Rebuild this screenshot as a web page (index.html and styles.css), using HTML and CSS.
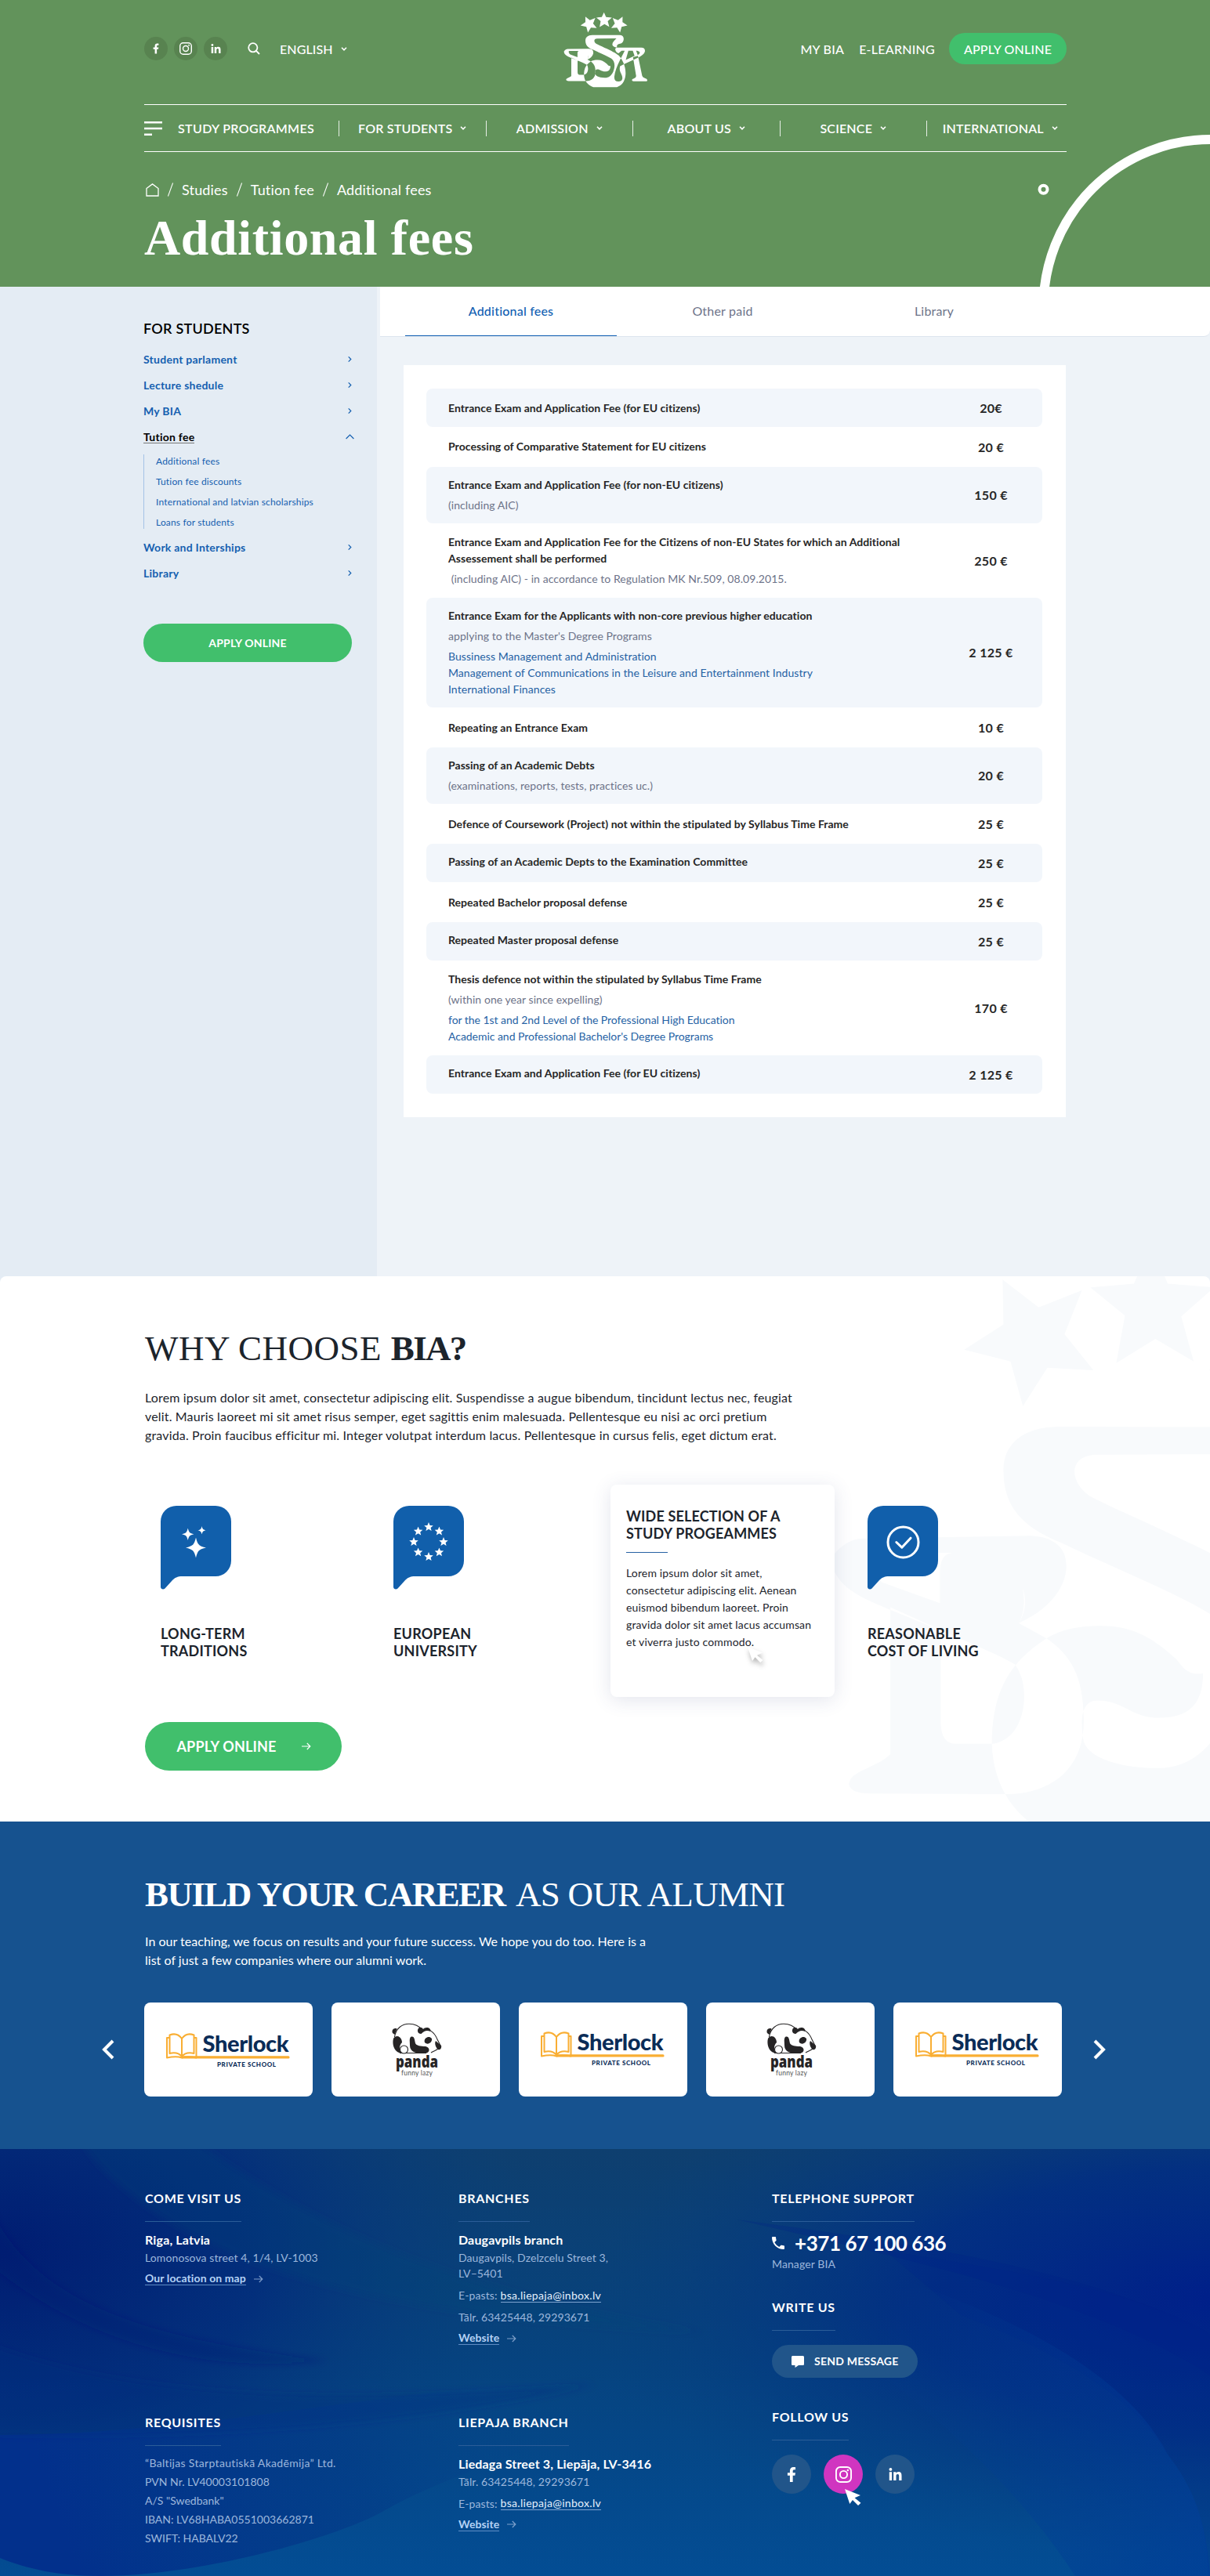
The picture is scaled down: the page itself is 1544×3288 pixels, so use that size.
FILE: index.html
```html
<!DOCTYPE html>
<html lang="en">
<head>
<meta charset="utf-8">
<title>Additional fees – BIA</title>
<link rel="stylesheet" href="styles.css">
</head>
<body>
<svg class="sprite" aria-hidden="true">
  <symbol id="fb" viewBox="0 0 320 512"><path d="M279.14 288l14.22-92.66h-88.91v-60.13c0-25.35 12.42-50.06 52.24-50.06h40.42V6.26S260.43 0 225.36 0c-73.22 0-121.08 44.38-121.08 124.72v70.62H22.89V288h81.39v224h100.17V288z"/></symbol>
  <symbol id="li" viewBox="0 0 448 448"><path d="M100.28 448H7.4V148.9h92.88zM53.79 108.1C24.09 108.1 0 83.5 0 53.8a53.79 53.79 0 0 1 107.58 0c0 29.7-24.1 54.3-53.79 54.3zM447.9 448h-92.68V302.4c0-34.7-.7-79.2-48.29-79.2-48.29 0-55.69 37.7-55.69 76.7V448h-92.78V148.9h89.08v40.8h1.3c12.4-23.5 42.69-48.3 87.88-48.3 94 0 111.28 61.9 111.28 142.3V448z"/></symbol>
  <symbol id="ig" viewBox="0 0 22 22"><g fill="none" stroke="currentColor" stroke-width="2"><rect x="1" y="1" width="20" height="20" rx="5.5"/><circle cx="11" cy="11" r="4.8"/></g><circle cx="16.6" cy="5.2" r="1.3"/></symbol>
  <symbol id="chev" viewBox="0 0 8 5"><path d="M1 .8L4 3.8 7 .8" fill="none" stroke="currentColor" stroke-width="1.6"/></symbol>
  <symbol id="arrow" viewBox="0 0 12 10"><path d="M0 5h10.6M6.8 1l4 4-4 4" fill="none" stroke="currentColor" stroke-width="1.2"/></symbol>
  <symbol id="next" viewBox="0 0 5 9"><path d="M.7 1.300L3.800 4.500.7 7.700" fill="none" stroke="currentColor" stroke-width="1.2"/></symbol>
  <symbol id="bubble" viewBox="0 0 90 107"><path d="M20 0H70a20 20 0 0 1 20 20V70a20 20 0 0 1-20 20H28c-7 0-10 2-13 5L5.500 105.500c-2 2-5.500 1-5.500-2V20A20 20 0 0 1 20 0z"/></symbol>
  <symbol id="spark" viewBox="-10 -10 20 20"><path d="M0-10C1.600-3 3-1.600 10 0 3 1.600 1.600 3 0 10-1.600 3-3 1.600-10 0-3-1.600-1.600-3 0-10z"/></symbol>
  <symbol id="star" viewBox="-10 -10 20 20"><path d="M0-10l2.700 6.500 6.900.500-5.300 4.500 1.700 6.700L0 4.500l-6 3.700 1.700-6.700-5.300-4.500 6.900-.500z"/></symbol>
  <symbol id="cursor" viewBox="0 0 20 20"><path d="M0 0l19 7.500-7 3.300 7.500 6.200-3.300 3-6.700-6.700L6 18z"/></symbol>
  <symbol id="crest" viewBox="22 30 326 293" overflow="visible">
    <path d="M106.200 48.600l17.400 13.500 20.900-8.300-8.400 21.200 14 17.400-22.300-1.200L116 109.800l-6-21.600-22.400-5.700 19-12.200zM249.800 48.600l-17.400 13.500-20.900-8.300 8.400 21.200-14 17.400 22.300-1.200L240 109.800l6-21.600 22.400-5.700-19-12.200zM148.600 52.400l21-1.800L178 32l8 18.600 22.500 1.800L192.500 66.400l6 21.800L180 77.300l-18.900 11.600 4.200-22.900z"/>
    <path fill-rule="evenodd" d="M24 182.500C28 177 33 174 38.400 173.800L119.800 172.400C131 173 137 178 137 187 137 197 129 208 114 214.600C118 207 116 200 116 198 115 188 108 180.700 91.400 180.700H44C40 182 42 190 48 195L75.900 205V190C76 184 78 181 82 180.700H91.400C108 180.700 115 188 116 198C118 204 117 210 114 214.600L127.400 222C139 230 145.400 240 145.400 262C145.400 285 130 297 108.500 297.300L42.200 297C34 297 31 294 32.300 291C34 286 46 284 52 278V207L76.300 218V262C76.300 270 79 273 84 273H101C111 272 116.600 262 116.600 250C116.600 243 115 239 112.300 234.700C98 226 50 208 40 203C28 197 23 190 24 182.500z
    M238 120L133 119.700C116 120 106.600 128 106.600 140.700C106.600 158 115 168 135 176C160 188 190 200 206.600 210.300C220 220 222 240 214 260C208 275 196 284.700 182 284.700C164 285 148 280 145.400 272C143.500 262 144 252 152 252C165 252 168 260.400 182 260.400C195 260.400 203 255 203 239C196 240 194 237 190 232C178 221 168 216 154 216C142 216 134 218 127.400 222C112 232 101 245 101 273C102 300 118 313 137 321H228C245 315 258 302 261 275C264 245 250 214 234 198C220 184 160 160 148 153C138 146 138 133.200 152 133.200L226 133C214 144 205 156 214 163C219 167 224 168 229 168C226 161 228 155 240 153C250 151 254 143 254 134C254 125 248 120 238 120z
    M222 177C220 171 224 168 232 168H322C331 168 336 173 336 180C336 190 326 198 312 206L256 232L240 240C234 262 249 270 249 285C249 295 242 299 233 299C222 299 217 292 218 280C220 262 228 240 240 216L258 180H246L234 190C227 187 223 182 222 177zM272 180L262 216L296 200L289 180zM302 180L308 197C316 193 318 187 314 184C312 182 308 180 302 180zM290 205L302 278C301 288 288 287 286 293C286 296 288 298 292 298H340C345 298 346 294 344 291C340 285 328 286 325 276L309 200z"/>
  </symbol>
  <symbol id="book" viewBox="0 0 158 44">
    <g fill="none" stroke="#f9ae33" stroke-width="2" stroke-linejoin="round"><path d="M4 6H1V31.500C8 30 15 29.500 20 31.500 25 29.500 32 30 38.500 31.500V6H35.500"/><path d="M4.500 2.500C11 0 16 1.500 20 7 24 1.500 29 0 35.500 2.500V26C29 24.500 24 25 20 30 16 25 11 24.500 4.500 26zM20 7V29"/></g>
    <path d="M20 29.300H156a1.200 1.200 0 0 1 0 3.200H20z" fill="#f9ae33"/>
  </symbol>
  <symbol id="bear" viewBox="0 0 66 72">
    <path d="M3.500 18C5 7 13 1.200 22 1.200 30 1.200 35 4 39 9M10 38.500H44M39 9C46 6 54 11 58 21L62 29C60 35 54 35 50 38" fill="none" stroke="#262425" stroke-width="1.100"/>
    <g fill="#262425"><path d="M1 13C-1 9 3 6 6.500 7.500L3.500 15zM33 9c1-4 5-4 7-1 2-3 10-3 9.500 3-5-2-8-1-12 3-3 0-5-2-4.500-5zM2 20c4-6 11-2 11 5-4 4-4 10 0 13.500C3 39 0 27 2 20zM24 18c5-2 5 4 6 8 1 3 7 4 13 4 6 1 6 8 0 8.600-12 1-20-1-20-10 0-4-1-8 1-10.600zM42 25c-2-5 5-10 9-5 1 5-5 9-9 5zM56 23l7 6c1 4-2 6-4 5-3-2-5-8-3-11z"/><circle cx="15.500" cy="34" r="5" fill="#fff" stroke="#262425" stroke-width="1.100"/></g>
  </symbol>
</svg>

<header class="header">
  <svg class="rings" viewBox="0 0 224 224"><circle cx="11.500" cy="75.700" r="5" stroke-width="4"/><circle cx="225" cy="225.500" r="213.500" stroke-width="12"/></svg>
  <div class="topbar">
    <div class="topbar-left">
      <a class="dot"><svg width="8" height="14"><use href="#fb"/></svg></a>
      <a class="dot"><svg width="16" height="16"><use href="#ig"/></svg></a>
      <a class="dot"><svg width="13" height="12"><use href="#li"/></svg></a>
      <svg class="search" width="16" height="16" viewBox="0 0 16 16"><circle cx="6.800" cy="6.800" r="5.600"/><path d="M11 11l4 4"/></svg>
      <a class="lang">ENGLISH <svg width="8" height="5"><use href="#chev"/></svg></a>
    </div>
    <svg class="crest" width="108" height="97"><use href="#crest"/></svg>
    <div class="topbar-right">
      <a>MY BIA</a><a>E-LEARNING</a><a class="btn btn-top">APPLY ONLINE</a>
    </div>
  </div>
  <nav class="nav">
    <a class="nav-first"><svg width="23" height="18" viewBox="0 0 23 18"><path d="M0 1.250H23M0 9H23M0 16.700H10" stroke="#fff" stroke-width="2.500"/></svg>STUDY PROGRAMMES</a>
    <a>FOR STUDENTS <svg width="8" height="5"><use href="#chev"/></svg></a>
    <a>ADMISSION <svg width="8" height="5"><use href="#chev"/></svg></a>
    <a>ABOUT US <svg width="8" height="5"><use href="#chev"/></svg></a>
    <a>SCIENCE <svg width="8" height="5"><use href="#chev"/></svg></a>
    <a>INTERNATIONAL <svg width="8" height="5"><use href="#chev"/></svg></a>
  </nav>
  <div class="crumbs">
    <svg width="17" height="17" viewBox="0 0 17 17"><path d="M1 6.500L8.500.900 16 6.500V16H1z" fill="none" stroke="#fff" stroke-width="1.300"/></svg>
    <i></i><a>Studies</a><i></i><a>Tution fee</a><i></i><a>Additional fees</a>
  </div>
  <h1>Additional fees</h1>
</header>

<main class="main">
  <aside class="side">
    <h2>FOR STUDENTS</h2>
    <a class="side-link">Student parlament <svg width="5" height="9"><use href="#next"/></svg></a>
    <a class="side-link">Lecture shedule <svg width="5" height="9"><use href="#next"/></svg></a>
    <a class="side-link">My BIA <svg width="5" height="9"><use href="#next"/></svg></a>
    <a class="side-link open"><span>Tution fee</span> <svg width="11" height="7" viewBox="0 0 11 7"><path d="M.6 6L5.500 1l4.900 5" fill="none" stroke="currentColor" stroke-width="1.200"/></svg></a>
    <div class="side-sub"><a>Additional fees</a><a>Tution fee discounts</a><a>International and latvian scholarships</a><a>Loans for students</a></div>
    <a class="side-link">Work and Interships <svg width="5" height="9"><use href="#next"/></svg></a>
    <a class="side-link">Library <svg width="5" height="9"><use href="#next"/></svg></a>
    <a class="btn btn-side">APPLY ONLINE</a>
  </aside>
  <div class="content">
    <div class="tabs"><a class="active">Additional fees</a><a>Other paid</a><a>Library</a></div>
    <div class="panel">
      <div class="row r49 first"><div><b>Entrance Exam and Application Fee (for EU citizens)</b></div><strong>20€</strong></div>
      <div class="row r51 upper"><div><b>Processing of Comparative Statement for EU citizens</b></div><strong>20 €</strong></div>
      <div class="row r72"><div><b>Entrance Exam and Application Fee (for non-EU citizens)</b><p>(including AIC)</p></div><strong>150 €</strong></div>
      <div class="row r95"><div><b>Entrance Exam and Application Fee for the Citizens of non-EU States for which an Additional<br>Assessement shall be performed</b><p>&nbsp;(including AIC) - in accordance to Regulation MK Nr.509, 08.09.2015.</p></div><strong>250 €</strong></div>
      <div class="row r140"><div><b>Entrance Exam for the Applicants with non-core previous higher education</b><p>applying to the Master's Degree Programs</p><p class="link">Bussiness Management and Administration<br>Management of Communications in the Leisure and Entertainment Industry<br>International Finances</p></div><strong>2 125 €</strong></div>
      <div class="row r51"><div><b>Repeating an Entrance Exam</b></div><strong>10 €</strong></div>
      <div class="row r72"><div><b>Passing of an Academic Debts</b><p>(examinations, reports, tests, practices uc.)</p></div><strong>20 €</strong></div>
      <div class="row r51"><div><b>Defence of Coursework (Project) not within the stipulated by Syllabus Time Frame</b></div><strong>25 €</strong></div>
      <div class="row r49"><div><b>Passing of an Academic Depts to the Examination Committee</b></div><strong>25 €</strong></div>
      <div class="row r51"><div><b>Repeated Bachelor proposal defense</b></div><strong>25 €</strong></div>
      <div class="row r49"><div><b>Repeated Master proposal defense</b></div><strong>25 €</strong></div>
      <div class="row r121"><div><b>Thesis defence not within the stipulated by Syllabus Time Frame</b><p>(within one year since expelling)</p><p class="link tight">for the 1st and 2nd Level of the Professional High Education<br>Academic and Professional Bachelor's Degree Programs</p></div><strong>170 €</strong></div>
      <div class="row r49"><div><b>Entrance Exam and Application Fee (for EU citizens)</b></div><strong>2 125 €</strong></div>
    </div>
  </div>
</main>

<section class="why">
  <svg class="watermark" width="861" height="774"><use href="#crest"/></svg>
  <h2 class="title"><span>WHY CHOOSE</span> <b>BIA?</b></h2>
  <p class="lead">Lorem ipsum dolor sit amet, consectetur adipiscing elit. Suspendisse a augue bibendum, tincidunt lectus nec, feugiat<br>velit. Mauris laoreet mi sit amet risus semper, eget sagittis enim malesuada. Pellentesque eu nisi ac orci pretium<br>gravida. Proin faucibus efficitur mi. Integer volutpat interdum lacus. Pellentesque in cursus felis, eget dictum erat.</p>
  <div class="reasons">
    <div class="reason">
      <svg width="90" height="107" viewBox="0 0 90 107"><use href="#bubble" width="90" height="107" fill="#115fab"/><g fill="#fff"><use href="#spark" x="32" y="40.500" width="26" height="26"/><use href="#spark" x="27" y="28.500" width="15.500" height="15.500"/><use href="#spark" x="47.300" y="26" width="10.500" height="10.500"/></g></svg>
      <h3>LONG-TERM<br>TRADITIONS</h3>
    </div>
    <div class="reason">
      <svg width="90" height="107" viewBox="0 0 90 107"><use href="#bubble" width="90" height="107" fill="#115fab"/><g fill="#fff"><use href="#star" x="39" y="21" width="12" height="12"/><use href="#star" x="52.400" y="26.600" width="12" height="12"/><use href="#star" x="58" y="40" width="12" height="12"/><use href="#star" x="52.400" y="53.400" width="12" height="12"/><use href="#star" x="39" y="59" width="12" height="12"/><use href="#star" x="25.600" y="53.400" width="12" height="12"/><use href="#star" x="20" y="40" width="12" height="12"/><use href="#star" x="25.600" y="26.600" width="12" height="12"/></g></svg>
      <h3>EUROPEAN<br>UNIVERSITY</h3>
    </div>
    <div class="reason hover">
      <h3>WIDE SELECTION OF A<br>STUDY PROGEAMMES</h3>
      <hr>
      <p>Lorem ipsum dolor sit amet,<br>consectetur adipiscing elit. Aenean<br>euismod bibendum laoreet. Proin<br>gravida dolor sit amet lacus accumsan<br>et viverra justo commodo.</p>
      <svg class="cursor" width="20" height="20"><use href="#cursor"/></svg>
    </div>
    <div class="reason">
      <svg width="90" height="107" viewBox="0 0 90 107"><use href="#bubble" width="90" height="107" fill="#115fab"/><g fill="none" stroke="#fff" stroke-width="3"><circle cx="45.500" cy="46.500" r="19.500"/><path d="M36.800 46.500l7 6.700 11.200-12" stroke-linecap="round" stroke-linejoin="round"/></g></svg>
      <h3>REASONABLE<br>COST OF LIVING</h3>
    </div>
  </div>
  <a class="btn btn-big">APPLY ONLINE <svg width="12" height="10"><use href="#arrow"/></svg></a>
</section>

<section class="career">
  <h2 class="title"><b>BUILD YOUR CAREER</b> <span>AS OUR ALUMNI</span></h2>
  <p class="lead">In our teaching, we focus on results and your future success. We hope you do too. Here is a<br>list of just a few companies where our alumni work.</p>
  <div class="slider">
    <svg width="16" height="26" viewBox="0 0 16 26"><path d="M14 2L3 13l11 11" fill="none" stroke="#fff" stroke-width="4"/></svg>
    <div class="slides">
      <div class="slide low"><svg width="158" height="44"><use href="#book"/><text x="46.500" y="24" textLength="110" class="sherlock-name">Sherlock</text><text x="65" y="42.500" textLength="75" class="sherlock-sub">PRIVATE SCHOOL</text></svg></div>
      <div class="slide panda"><svg width="66" height="72"><use href="#bear"/><text x="5" y="56.500" textLength="54" lengthAdjust="spacingAndGlyphs" class="panda-name">panda</text><text x="12" y="67" textLength="40" class="panda-sub">funny lazy</text></svg></div>
      <div class="slide"><svg width="158" height="44"><use href="#book"/><text x="46.500" y="24" textLength="110" class="sherlock-name">Sherlock</text><text x="65" y="42.500" textLength="75" class="sherlock-sub">PRIVATE SCHOOL</text></svg></div>
      <div class="slide panda"><svg width="66" height="72"><use href="#bear"/><text x="5" y="56.500" textLength="54" lengthAdjust="spacingAndGlyphs" class="panda-name">panda</text><text x="12" y="67" textLength="40" class="panda-sub">funny lazy</text></svg></div>
      <div class="slide"><svg width="158" height="44"><use href="#book"/><text x="46.500" y="24" textLength="110" class="sherlock-name">Sherlock</text><text x="65" y="42.500" textLength="75" class="sherlock-sub">PRIVATE SCHOOL</text></svg></div>
    </div>
    <svg width="16" height="26" viewBox="0 0 16 26"><path d="M2 2l11 11L2 24" fill="none" stroke="#fff" stroke-width="4"/></svg>
  </div>
</section>

<footer class="footer">
  <svg class="waves" viewBox="0 0 1544 545" preserveAspectRatio="none">
    <defs>
      <linearGradient id="base" x1="0" y1="0" x2="0" y2="1"><stop offset="0" stop-color="#0e3f6f"/><stop offset=".5" stop-color="#06437f"/><stop offset="1" stop-color="#034d94"/></linearGradient>
      <radialGradient id="glowL" gradientUnits="userSpaceOnUse" cx="0" cy="0" r="1" gradientTransform="translate(0 130) scale(680 420)"><stop offset="0" stop-color="#001c72"/><stop offset=".5" stop-color="#022c7c" stop-opacity=".85"/><stop offset="1" stop-color="#06407f" stop-opacity="0"/></radialGradient>
      <radialGradient id="glowR" gradientUnits="userSpaceOnUse" cx="0" cy="0" r="1" gradientTransform="translate(1560 190) scale(820 330)"><stop offset="0" stop-color="#001f8a"/><stop offset=".5" stop-color="#012d84" stop-opacity=".85"/><stop offset="1" stop-color="#063f80" stop-opacity="0"/></radialGradient>
      <linearGradient id="blob" gradientUnits="userSpaceOnUse" x1="100" y1="545" x2="700" y2="330"><stop offset="0" stop-color="#02308c"/><stop offset=".6" stop-color="#033c88" stop-opacity=".7"/><stop offset="1" stop-color="#04468a" stop-opacity="0"/></linearGradient>
      <linearGradient id="rim" gradientUnits="userSpaceOnUse" x1="1100" y1="300" x2="1544" y2="450"><stop offset="0" stop-color="#02408e" stop-opacity="0"/><stop offset="1" stop-color="#003a99"/></linearGradient>
      <filter id="soft" x="-10%" y="-10%" width="120%" height="120%"><feGaussianBlur stdDeviation="5"/></filter>
    </defs>
    <rect width="1544" height="545" fill="url(#base)"/>
    <rect width="1544" height="545" fill="url(#glowL)"/>
    <rect width="1544" height="545" fill="url(#glowR)"/>
    <path d="M-10 365C200 365 380 330 560 310C760 290 860 290 900 317C760 350 560 420 488 463C430 495 260 545 126 545C70 545 30 535 -10 518z" fill="url(#blob)"/>
    <g filter="url(#soft)">
      <path d="M103 -10C140 50 230 110 321 144C450 190 600 220 900 234C600 190 400 100 250 -10z" fill="#0a4378" opacity=".25"/>
      <path d="M-10 80C40 180 150 240 420 270C250 290 100 240 -10 150z" fill="#001a70" opacity=".3"/>
      <path d="M-10 250C200 330 500 320 760 300C500 360 200 370 -10 365z" fill="#02307f" opacity=".3"/>
    </g>
    <path d="M940 90C1170 120 1420 160 1560 246V300C1420 200 1200 150 940 90z" fill="#001f88" opacity=".25"/>
    <path d="M1226 212C1300 240 1440 300 1490 390C1530 440 1540 490 1542 545H1560V246C1480 190 1330 160 1130 130z" fill="#00258c" opacity=".2"/>
    <path d="M1130 160C1300 215 1440 290 1490 390C1530 440 1540 490 1544 545H1372C1330 480 1250 380 1100 270z" fill="url(#rim)" opacity=".6"/>
  </svg>
  <div class="fcol">
    <div class="fblock">
      <h4>COME VISIT US</h4>
      <h5>Riga, Latvia</h5><p>Lomonosova street 4, 1/4, LV-1003</p>
      <p class="gap"><a class="more">Our location on map</a><svg width="12" height="10"><use href="#arrow"/></svg></p>
    </div>
    <div class="fblock req">
      <h4>REQUISITES</h4>
      <p><span class="airy">“Baltijas Starptautiskā Akadēmija” Ltd.</span><br>PVN Nr. LV40003101808<br>A/S "Swedbank"<br>IBAN: LV68HABA0551003662871<br>SWIFT: HABALV22</p>
    </div>
  </div>
  <div class="fcol">
    <div class="fblock">
      <h4>BRANCHES</h4>
      <h5>Daugavpils branch</h5><p>Daugavpils, Dzelzcelu Street 3,<br>LV–5401</p>
      <p class="gap">E-pasts: <a class="mail">bsa.liepaja@inbox.lv</a></p>
      <p class="gap">Tālr. 63425448, 29293671</p>
      <p class="gap"><a class="more">Website</a><svg width="12" height="10"><use href="#arrow"/></svg></p>
    </div>
    <div class="fblock">
      <h4>LIEPAJA BRANCH</h4>
      <h5>Liedaga Street 3, Liepāja, LV-3416</h5><p>Tālr. 63425448, 29293671</p>
      <p class="gap">E-pasts: <a class="mail">bsa.liepaja@inbox.lv</a></p>
      <p class="gap"><a class="more">Website</a><svg width="12" height="10"><use href="#arrow"/></svg></p>
    </div>
  </div>
  <div class="fcol wide">
    <h4>TELEPHONE SUPPORT</h4>
    <div class="phone"><svg width="16" height="16" viewBox="0 0 16 16"><path d="M0 .900C0 .400.400 0 .900 0H4.200c.500 0 .900.400.900.900 0 1.100.200 2.200.500 3.200.100.300 0 .700-.200.900L3.300 7.100c1.300 2.500 3.400 4.600 6 6l2-2.100c.200-.200.600-.300.900-.200 1 .300 2 .500 3 .500.500 0 .800.400.800.900V15.100c0 .500-.400.900-.900.900C6.800 16 0 9.200 0 .900z"/></svg>+371 67 100 636</div>
    <p>Manager BIA</p>
    <h4 class="h-write">WRITE US</h4>
    <a class="send"><svg width="16" height="15" viewBox="0 0 16 15"><path d="M1.600 0H14.400C15.300 0 16 .700 16 1.600V10.400C16 11.300 15.300 12 14.400 12H9L4.500 15V12H1.600C.700 12 0 11.300 0 10.400V1.600C0 .700.700 0 1.600 0z"/></svg>SEND MESSAGE</a>
    <h4 class="h-follow">FOLLOW US</h4>
    <div class="follow">
      <a><svg width="12" height="19"><use href="#fb"/></svg></a>
      <a class="pink"><svg width="21" height="21"><use href="#ig"/></svg><svg class="cursor" width="21" height="21"><use href="#cursor"/></svg></a>
      <a><svg width="17" height="16"><use href="#li"/></svg></a>
    </div>
  </div>
</footer>
</body>
</html>
```
FILE: styles.css
```css
* { box-sizing: border-box; }
body, h1, h2, h3, h4, h5, p, hr { margin: 0; }
body { width: 1544px; font-family: Lato, "Open Sans", sans-serif; font-size: 16px; letter-spacing: .1px; color: #1c242c; background: #fff; }
svg { display: block; flex: none; fill: currentColor; }
.sprite { position: absolute; width: 0; height: 0; }
.btn { display: flex; align-items: center; justify-content: center; background: #41bf6c; color: #fff; font-weight: 700; }

/* header */
.header { position: relative; height: 366px; padding: 0 183px 0 184px; background: #62935b; color: #fff; overflow: hidden; }
.rings { position: absolute; left: 1320px; top: 166px; width: 224px; height: 224px; fill: none; stroke: #fff; }
.topbar { display: flex; align-items: center; height: 124px; font-weight: 500; }
.topbar-left, .topbar-right { flex: 1; display: flex; align-items: center; }
.topbar-right { justify-content: flex-end; gap: 19px; letter-spacing: .250px; }
.dot { display: flex; align-items: center; justify-content: center; width: 30px; height: 30px; margin-right: 8px; border-radius: 50%; background: #588350; }
.search { margin-left: 18px; margin-right: 25px; fill: none; stroke: #fff; stroke-width: 1.800; }
.lang { display: flex; align-items: center; gap: 10px; }
.crest { position: relative; top: 1px; }
.btn-top { width: 150px; height: 40px; border-radius: 20px; font-weight: 500; letter-spacing: .2px; margin-left: -1px; }
.nav { display: grid; grid-template-columns: 248px repeat(5, 187.500px); height: 61px; margin-top: 9px; border-top: 1px solid #fff; border-bottom: 1px solid #fff; align-items: center; font-weight: 600; letter-spacing: .200px; }
.nav a { display: flex; align-items: center; justify-content: center; gap: 10px; height: 20px; border-left: 1px solid rgba(255,255,255,.85); }
.nav .nav-first { justify-content: flex-start; gap: 20px; border: 0; letter-spacing: .350px; }
.crumbs { display: flex; align-items: center; height: 24px; margin-top: 36px; padding-left: 2px; font-size: 18px; letter-spacing: .170px; }
.crumbs i { width: 1px; height: 18px; margin: 0 14px; background: #fff; transform: rotate(20deg); }
h1 { margin-top: 15px; font: 700 64px/70px "Liberation Serif", serif; letter-spacing: .650px; }

/* main */
.main { display: flex; height: 1271px; background: #eef3f8; }
.side { width: 481px; padding: 41px 32px 0 183px; background: #e4ecf4; color: #1560b0; }
.side h2 { margin-bottom: 11px; font-size: 18px; line-height: 24px; font-weight: 600; letter-spacing: .250px; color: #000; }
.side-link { display: flex; align-items: center; justify-content: space-between; height: 33px; font-size: 14px; font-weight: 700; letter-spacing: .250px; }
.side-link.open { margin-right: -3px; }
.open span { color: #000; border-bottom: 1px solid #777; line-height: 15px; }
.side-sub { display: flex; flex-direction: column; gap: 10px; height: 95px; margin: 6px 0 7px; padding: 1px 0 0 15px; border-left: 1px solid #a4c3e6; font-size: 12px; line-height: 16px; letter-spacing: .170px; }
.btn-side { width: 266px; height: 49px; margin-top: 48px; border-radius: 25px; font-size: 14px; letter-spacing: .180px; }
.content { flex: 1; padding-left: 4px; }
.tabs { display: flex; height: 64px; padding-left: 32px; background: #fff; border-bottom: 1px solid #dde5ee; border-radius: 0 0 8px 0; color: #6d7389; }
.tabs a { width: 270px; height: 63px; line-height: 62px; text-align: center; letter-spacing: .200px; }
.tabs .active { color: #1160b2; font-weight: 500; border-bottom: 1.500px solid #1160b2; }
.panel { width: 845px; height: 960px; margin: 36px 0 0 30px; padding: 30px 30px 0 29px; background: #fff; }
.row { display: flex; padding: 12px 0 0 28px; border-radius: 8px; font-size: 14px; line-height: 21px; letter-spacing: .060px; }
.row:nth-child(odd) { background: #f2f6fb; }
.row > div { flex: 1; }
.row b { display: block; font-weight: 700; letter-spacing: .040px; color: #262626; white-space: nowrap; }
.row p { margin-top: 5px; color: #6d7389; white-space: nowrap; }
.row .link { color: #2662a4; }
.row .tight { letter-spacing: -.040px; }
.row strong { display: flex; align-items: center; justify-content: center; width: 131px; margin-top: -12px; padding-bottom: 1px; font-size: 16px; letter-spacing: .300px; color: #262626; }
.r49 { height: 49px; }
.r51 { height: 51px; padding-top: 15px; }
.r51 strong { margin-top: -15px; }
.r72 { height: 72px; }
.r95 { height: 95px; padding-top: 13px; }
.r140 { height: 140px; }
.r121 { height: 121px; padding-top: 13px; }
.row.first, .row.upper { padding-top: 14px; }
.row.first strong, .row.upper strong { margin-top: -14px; }

/* why */
.why { position: relative; height: 696px; margin-top: -8px; padding: 65px 0 0 185px; background: #fff; border-radius: 8px 8px 0 0; overflow: hidden; }
.why > * { position: relative; }
.why .watermark { position: absolute; left: 1057px; top: -45px; color: #f8fafc; }
.title { font: 400 45px/54px "Liberation Serif", serif; }
.why .title { color: #1c242c; letter-spacing: .500px; }
.why .title b { letter-spacing: -1.700px; }
.lead { line-height: 24px; }
.why .lead { margin-top: 24px; letter-spacing: .160px; }
.reasons { display: grid; grid-template-columns: 297px 297px 308px 286px; margin-top: 51px; }
.reason { position: relative; width: 286px; height: 271px; padding: 27px 20px 0; }
.reason h3 { margin-top: 45px; font-size: 18px; line-height: 22px; font-weight: 700; letter-spacing: .220px; }
.reason.hover { padding-top: 29px; background: #fff; border-radius: 8px; box-shadow: 0 4px 24px rgba(60,70,130,.14); }
.hover h3 { margin-top: 0; letter-spacing: .160px; }
.hover hr { width: 53px; height: 0; margin-top: 13px; border: 0; border-top: 1.500px solid #2662a4; }
.hover p { margin-top: 15px; font-size: 14px; line-height: 22px; letter-spacing: .150px; }
.hover .cursor { position: absolute; left: 175px; top: 207px; color: #fff; overflow: visible; filter: drop-shadow(1px 4px 3px rgba(0,0,0,.3)); }
.btn-big { width: 251px; height: 62px; margin-top: 32px; border-radius: 31px; font-size: 18px; gap: 32px; padding-left: 1px; letter-spacing: .180px; }

/* career */
.career { height: 418px; padding-top: 66px; background: #16528f; color: #fff; }
.career .title, .career .lead { margin-left: 185px; }
.career .title b { letter-spacing: -1.550px; }
.career .title span { letter-spacing: -.700px; margin-left: 2px; }
.career .lead { margin-top: 21px; letter-spacing: .020px; }
.slider { display: flex; align-items: center; margin-top: 42px; padding-left: 130px; }
.slides { display: flex; gap: 24px; margin: 0 40px 0 38px; }
.slide { width: 215px; height: 120px; padding: 37px 0 0 28px; border-radius: 8px; background: #fff; }
.slide.low { padding-top: 39px; }
.slide.panda { padding: 26px 0 0 77px; }
.sherlock-name { font: 900 29px Lato, sans-serif; letter-spacing: 0; fill: #0a2c57; }
.sherlock-sub { font: 900 8px Lato, sans-serif; letter-spacing: 0; fill: #0a2c57; }
.panda-name { font: 800 21px "Open Sans", sans-serif; letter-spacing: 0; fill: #262425; }
.panda-sub { font: 400 8.500px Lato, sans-serif; letter-spacing: 0; fill: #555; }

/* footer */
.footer { position: relative; display: flex; height: 545px; padding: 53px 0 0 185px; background: #06447f; color: #fff; overflow: hidden; }
.waves { position: absolute; inset: 0; width: 100%; height: 100%; }
.fcol { position: relative; width: 400px; font-size: 14px; line-height: 20px; color: #9db7dc; }
.fblock { height: 285.500px; }
.footer h4 { width: fit-content; padding-bottom: 19px; border-bottom: 1px solid #2b5d98; font-size: 16px; line-height: 20px; color: #fff; letter-spacing: .700px; }
.footer h5 { margin: 11px 0 1px; font-size: 16px; line-height: 24px; letter-spacing: .150px; color: #fff; }
.footer .gap { display: flex; align-items: center; gap: 4px; margin-top: 8px; }
.gap svg { margin-left: 6px; opacity: .8; }
.more { font-weight: 700; color: #b5d2f5; border-bottom: 1px solid #5f8cc4; line-height: 16px; }
.mail { color: #e6f0fc; border-bottom: 1px solid #7ea3d0; line-height: 16px; letter-spacing: .300px; }
.req p { margin-top: 10px; line-height: 24px; letter-spacing: 0; }
.airy { letter-spacing: .320px; }
.phone { display: flex; align-items: center; gap: 13px; margin: 11px 0 1px; font-size: 26px; line-height: 32px; font-weight: 700; letter-spacing: -.450px; color: #fff; }
.h-write { margin-top: 35px; }
.send { display: flex; align-items: center; gap: 13px; width: 186px; height: 42px; margin-top: 18px; padding-left: 25px; border-radius: 21px; background: #21558a; color: #fff; font-weight: 700; letter-spacing: .240px; }
.h-follow { margin-top: 40px; }
.follow { display: flex; gap: 16px; margin-top: 18px; color: #fff; }
.follow a { position: relative; display: flex; align-items: center; justify-content: center; width: 50px; height: 50px; border-radius: 50%; background: #21558a; }
.follow .pink { background: #d035c0; }
.pink .cursor { position: absolute; left: 27px; top: 44px; }
```
